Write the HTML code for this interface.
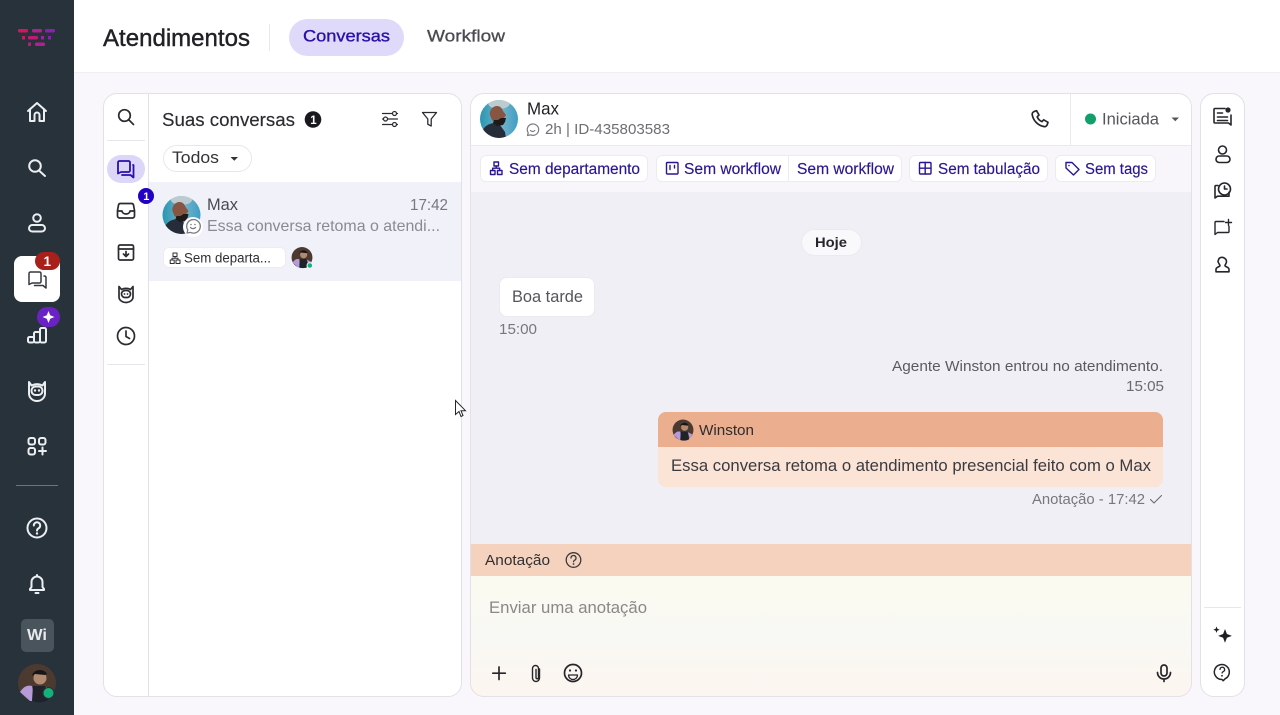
<!DOCTYPE html>
<html lang="pt-BR"><head><meta charset="utf-8"><title>Atendimentos</title>
<style>
html,body{margin:0;padding:0;width:1280px;height:715px;overflow:hidden;background:#f9f7fc;font-family:"Liberation Sans",sans-serif}
svg{position:absolute;left:0;top:0}
text{font-family:"Liberation Sans",sans-serif}
.b{position:absolute;box-sizing:border-box}
.i{fill:none;stroke-linecap:round;stroke-linejoin:round}
</style></head><body>
<div class="b" style="left:74px;top:0;width:1206px;height:73px;background:#fff;border-bottom:1px solid #f0eff3"></div>
<div class="b" style="left:0;top:0;width:74px;height:715px;background:#27323a"></div>
<div class="b" style="left:14px;top:256px;width:46px;height:46px;background:#fff;border-radius:8px"></div>
<div class="b" style="left:289px;top:19px;width:115px;height:37px;background:#dfdaf9;border-radius:19px"></div>
<div class="b" style="left:269px;top:24px;width:1px;height:27px;background:#e9e9eb"></div>

<div class="b" style="left:103px;top:93px;width:359px;height:604px;background:#fff;border:1px solid #e2e1e6;border-radius:14px;overflow:hidden">
 <div class="b" style="left:44px;top:0;width:1px;height:604px;background:#e2e1e6"></div>
 <div class="b" style="left:45px;top:88px;width:314px;height:99px;background:#f1f1fa"></div>
</div>
<div class="b" style="left:107px;top:140px;width:38px;height:1px;background:#e8e8ec"></div>
<div class="b" style="left:107px;top:364px;width:38px;height:1px;background:#e8e8ec"></div>
<div class="b" style="left:107px;top:155px;width:38px;height:28px;background:#dcd6f8;border-radius:14px"></div>
<div class="b" style="left:163px;top:145px;width:89px;height:27px;background:#fff;border:1px solid #e8e7ec;border-radius:14px"></div>
<div class="b" style="left:163px;top:247px;width:123px;height:21px;background:#fff;border:1px solid #ececf1;border-radius:6px"></div>

<div class="b" style="left:470px;top:93px;width:722px;height:604px;background:#f0eff5;border:1px solid #e2e1e6;border-radius:14px;overflow:hidden">
 <div class="b" style="left:0;top:0;width:720px;height:52px;background:#fff;border-bottom:1px solid #eaeaee"></div>
 <div class="b" style="left:0;top:52px;width:720px;height:46px;background:#f8f6fb"></div>
 <div class="b" style="left:599px;top:0;width:1px;height:52px;background:#eaeaee"></div>
 <div class="b" style="left:0;top:450px;width:720px;height:32px;background:#f5d2bd"></div>
 <div class="b" style="left:0;top:482px;width:720px;height:121px;background:linear-gradient(#fbfaf0,#f8f9f4 50%,#fdf5ef)"></div>
</div>
<div class="b" style="left:480px;top:155px;width:168px;height:27px;background:#fff;border:1px solid #ecebf0;border-radius:6px"></div>
<div class="b" style="left:656px;top:155px;width:246px;height:27px;background:#fff;border:1px solid #ecebf0;border-radius:6px"></div>
<div class="b" style="left:788px;top:155px;width:1px;height:27px;background:#ecebf0"></div>
<div class="b" style="left:909px;top:155px;width:139px;height:27px;background:#fff;border:1px solid #ecebf0;border-radius:6px"></div>
<div class="b" style="left:1055px;top:155px;width:101px;height:27px;background:#fff;border:1px solid #ecebf0;border-radius:6px"></div>
<div class="b" style="left:801px;top:229px;width:61px;height:27px;background:#f9f8fb;border:1px solid #ebeaee;border-radius:14px"></div>
<div class="b" style="left:499px;top:277px;width:96px;height:40px;background:#fff;border:1px solid #ebeaee;border-radius:8px"></div>
<div class="b" style="left:658px;top:412px;width:505px;height:75px;background:#fbe4d6;border-radius:8px;overflow:hidden"><div style="height:35px;background:#ebae8e"></div></div>
<div class="b" style="left:1200px;top:93px;width:45px;height:604px;background:#fff;border:1px solid #e2e1e6;border-radius:14px"></div>
<div class="b" style="left:1204px;top:607px;width:37px;height:1px;background:#e8e8ec"></div>
<div class="b" style="left:16px;top:485px;width:42px;height:1px;background:#6d757b"></div>
<div class="b" style="left:21px;top:619px;width:33px;height:33px;background:#4a545c;border-radius:5px"></div>

<svg width="1280" height="715" viewBox="0 0 1280 715" xmlns="http://www.w3.org/2000/svg">
<defs>
<linearGradient id="av" x1="0" y1="0" x2="1" y2="0"><stop offset="0" stop-color="#2a96b2"/><stop offset=".55" stop-color="#74b4c8"/><stop offset="1" stop-color="#3f9ec4"/></linearGradient>
<clipPath id="cc"><circle r="19"/></clipPath>
<g id="max"><g clip-path="url(#cc)"><rect x="-19" y="-19" width="38" height="38" fill="url(#av)"/><ellipse cx="0" cy="-16" rx="11" ry="6" fill="#bccbd0"/><path d="M-18 19c0-9 5-14 13-15l6 2 5 7 1 6z" fill="#262c38"/><path d="M-9-4c-1-5 3-9 7-9 3 0 5 2 6 5l3 4-2 3-1 4-7 1-4-3z" fill="#875541"/><path d="M-5 1l4 0 3-2 5 0-1 4-2 3-6 1-4-3z" fill="#1e1a1a"/></g></g>
<g id="win"><circle r="19" fill="#4c3a30"/><path d="M-17 9c4-6 8-7 12-6l3 15h-5z" fill="#b79ad8"/><path d="M-4 3h12l3 14a19 19 0 0 1-16 1z" fill="#20222a"/><circle cx="3" cy="-5" r="6.5" fill="#b28a70"/><path d="M-5-7c1-7 12-8 15-2l-2 1-10-1z" fill="#16161a"/><path d="M9 4l8 4-5 8z" fill="#b79ad8"/></g>
</defs>

<!-- logo -->
<g fill="#c01a78">
<rect x="18" y="29" width="10" height="3.5" rx="1.5" fill="#d4145f"/><rect x="32" y="29" width="10" height="3.5" rx="1.5" fill="#b2208f"/><rect x="45" y="29" width="10" height="3.5" rx="1.5" fill="#8a1fb0"/>
<rect x="22" y="36" width="3" height="3.5" fill="#d4145f"/><rect x="28" y="36" width="10" height="3.5" rx="1.5"/><rect x="41" y="36" width="3" height="3.5" fill="#a0209f"/><rect x="48" y="36" width="3" height="3.5" fill="#8a1fb0"/>
<rect x="28" y="42.500" width="3" height="3.500"/><rect x="35" y="42.500" width="10" height="3.500" rx="1.500" fill="#b2208f"/>
</g>

<!-- nav icons -->
<g class="i" stroke="#eceff1" stroke-width="2">
<path d="M28 111l9-8 9 8M30 109v12h4.500v-6a2.500 2.500 0 0 1 5 0v6H44v-12"/>
<circle cx="35" cy="166" r="5.800"/><path d="M39.500 171l5.500 5"/>
<circle cx="37" cy="218" r="3.800"/><rect x="29" y="225" width="16" height="6.500" rx="3.250"/>
<rect x="28" y="337" width="6" height="5.500" rx="1.500"/><rect x="34" y="332" width="6" height="10.500" rx="1.500"/><rect x="40" y="328" width="6" height="14.500" rx="1.500"/>
<path d="M29 382v11.500a8 7.500 0 0 0 16 0V382l-2.500 3.500a12 12 0 0 0-11 0z"/><rect x="31.500" y="386.500" width="11" height="8.500" rx="4"/>
<rect x="28.500" y="438" width="6.500" height="6.500" rx="2"/><rect x="39" y="438" width="6.500" height="6.500" rx="2"/><rect x="28.500" y="448" width="6.500" height="6.500" rx="2"/><path d="M42.500 447.500v7M39 451h7"/>
<circle cx="37" cy="528" r="9.500"/><path d="M33.800 525.500a3.200 3.200 0 1 1 4.800 2.800c-1 .6-1.600 1.200-1.600 2.300"/>
<path d="M30 590v-1l1.500-2v-5a5.500 5.500 0 0 1 11 0v5l1.500 2v1zM37 576v-1M35.500 593h3"/>
</g>
<circle cx="37" cy="533.500" r="1.200" fill="#eceff1"/>
<circle cx="35" cy="390.500" r="1.200" fill="#eceff1"/><circle cx="39" cy="390.500" r="1.200" fill="#eceff1"/>
<g class="i" stroke="#33393e" stroke-width="1.500"><path d="M29 273.500a1.500 1.500 0 0 1 1.500-1.500h9a1.500 1.500 0 0 1 1.500 1.500v8a1.500 1.500 0 0 1-1.500 1.500H32l-3 1.500z"/><path d="M44 276h.5a1.500 1.500 0 0 1 1.500 1.500v10.500l-3-2.500h-8.500"/></g>
<rect x="35" y="252" width="25" height="18" rx="9" fill="#a8201a"/>
<text x="43.500" y="266" font-size="13.500" font-weight="700" fill="#fff">1</text>
<rect x="37" y="307" width="23" height="20" rx="10" fill="#6a22c4"/>
<path d="M48.500 311l1.700 4.300 4.300 1.700-4.300 1.700-1.700 4.300-1.700-4.300-4.300-1.700 4.300-1.700z" fill="#fff"/>
<text x="27" y="640" font-size="16" font-weight="700" fill="#e8eaec" textLength="20" lengthAdjust="spacingAndGlyphs">Wi</text>
<use href="#win" transform="translate(37 683)"/>
<circle cx="48.500" cy="693" r="5.500" fill="#14b27a" stroke="#27323a" stroke-width="1"/>

<!-- header text -->
<text x="103" y="46" font-size="24" fill="#212125" stroke="#212125" stroke-width=".4" textLength="147" lengthAdjust="spacingAndGlyphs">Atendimentos</text>
<text x="303" y="41.500" font-size="17" fill="#2a10a8" stroke="#2a10a8" stroke-width=".35" textLength="87" lengthAdjust="spacingAndGlyphs">Conversas</text>
<text x="427" y="41.500" font-size="17" fill="#4a4a50" stroke="#4a4a50" stroke-width=".3" textLength="78" lengthAdjust="spacingAndGlyphs">Workflow</text>

<!-- left rail -->
<g class="i" stroke="#2b2b30" stroke-width="1.700">
<circle cx="124.500" cy="115.500" r="5.800"/><path d="M129 120l4.500 4.500"/>
<path d="M120.500 203.500h11a2 2 0 0 1 2 1.500l1 5.500v5.500a2 2 0 0 1-2 2h-13a2 2 0 0 1-2-2v-5.500l1-5.500a2 2 0 0 1 2-1.500z"/><path d="M118 211h4a4 3 0 0 0 8 0h4"/>
<rect x="118.500" y="245" width="15" height="15" rx="1.500"/><path d="M118.500 249h15M126 251.500v5M123.500 254l2.500 2.500 2.500-2.500"/>
<path d="M119 286.500v10.500a7 5.500 0 0 0 14 0v-10.500l-2.500 3a10 10 0 0 0-9 0z"/><rect x="121.500" y="290.500" width="9" height="7" rx="3.500"/>
<circle cx="126" cy="336" r="8.500"/><path d="M126 331v5.500l3.500 2"/>
</g>
<circle cx="124.500" cy="294" r=".9" fill="#2b2b30"/><circle cx="127.500" cy="294" r=".9" fill="#2b2b30"/>
<g class="i" stroke="#2a10a8" stroke-width="1.800"><path d="M118 162.500a1.500 1.500 0 0 1 1.500-1.500h9a1.500 1.500 0 0 1 1.500 1.500v8a1.500 1.500 0 0 1-1.500 1.500H121l-3 1.500z"/><path d="M133 165h.5v12.500l-3-2.500h-8.500"/></g>
<circle cx="146" cy="196" r="8" fill="#2200c4"/>
<text x="143.200" y="200" font-size="11" font-weight="700" fill="#fff">1</text>

<!-- list -->
<text x="162" y="126" font-size="18.500" fill="#2b2b30" stroke="#2b2b30" stroke-width=".15" textLength="133" lengthAdjust="spacingAndGlyphs">Suas conversas</text>
<circle cx="313" cy="119.500" r="8.300" fill="#1a1a1e"/><text x="310.300" y="124" font-size="11.500" font-weight="700" fill="#fff">1</text>
<g class="i" stroke="#2b2b30" stroke-width="1.200">
<path d="M382.500 113.500h10M396.500 113.500h1M382.500 119h1M387.500 119h10M382.500 124.500h10M396.500 124.500h1"/><circle cx="394.500" cy="113.500" r="2"/><circle cx="385.500" cy="119" r="2"/><circle cx="394.500" cy="124.500" r="2"/>
<path d="M422.500 112.500h14l-5.300 6.500v7l-3.400-1.700v-5.300z" stroke-width="1.300"/>
</g>
<text x="172" y="163" font-size="17" fill="#333338" textLength="47" lengthAdjust="spacingAndGlyphs">Todos</text>
<path d="M230.500 157h7.500l-3.700 3.800z" fill="#333338"/>
<use href="#max" transform="translate(181.500 215)"/>
<circle cx="193" cy="227" r="10" fill="#fff"/>
<g class="i" stroke="#7a7a80" stroke-width="1.300"><path d="M187 233l.8-3a6.800 6.800 0 1 1 2.700 2.400z"/><path d="M190.500 227.500c1.300 1.500 3.500 1.500 5 0"/></g>
<circle cx="191" cy="224.500" r=".8" fill="#7a7a80"/><circle cx="195" cy="224.500" r=".8" fill="#7a7a80"/>
<text x="207" y="210" font-size="16.500" fill="#4a4a54" textLength="31" lengthAdjust="spacingAndGlyphs">Max</text>
<text x="410" y="210" font-size="15.500" fill="#78787e" textLength="38" lengthAdjust="spacingAndGlyphs">17:42</text>
<text x="207" y="231" font-size="16" fill="#8a8a92" textLength="233" lengthAdjust="spacingAndGlyphs">Essa conversa retoma o atendi...</text>
<g class="i" stroke="#2f2f34" stroke-width="1"><rect x="173" y="253" width="4" height="3.500"/><rect x="170.200" y="260" width="4" height="3.500"/><rect x="176" y="260" width="4" height="3.500"/><path d="M175 256.500v1.700h-3v1.800M175 258.200h3v1.800"/></g>
<text x="184" y="262.500" font-size="13.500" fill="#2f2f34" textLength="87" lengthAdjust="spacingAndGlyphs">Sem departa...</text>
<use href="#win" transform="translate(302 257.500) scale(.55)"/>
<circle cx="309.800" cy="265.500" r="2.800" fill="#14b27a" stroke="#f1f1fa"/>

<!-- chat header -->
<use href="#max" transform="translate(499 119)"/>
<text x="527" y="114.500" font-size="17.500" fill="#222226" textLength="32" lengthAdjust="spacingAndGlyphs">Max</text>
<g class="i" stroke="#7a7a80" stroke-width="1.200"><path d="M527.500 135.500l.7-2.700a5.700 5.700 0 1 1 2.300 2z"/><path d="M530.500 130.500c1.200 1.300 3 1.300 4.300 0"/></g>
<text x="545" y="134" font-size="15" fill="#6e6e74" textLength="125" lengthAdjust="spacingAndGlyphs">2h | ID-435803583</text>
<path class="i" stroke="#26262a" stroke-width="1.700" d="M1034 111.500l2.500-.8 2.500 4.300-1.800 1.800c.8 2 2.700 4 4.700 4.800l1.800-1.800 4.300 2.500-.8 2.500c-.4 1.200-1.800 2-3 1.800-6.200-1-11-6-12-12-.2-1.200.6-2.500 1.800-2.900z"/>
<circle cx="1090.500" cy="119" r="5.500" fill="#12a06a"/>
<text x="1102" y="124.500" font-size="16.500" fill="#55555c" textLength="57" lengthAdjust="spacingAndGlyphs">Iniciada</text>
<path d="M1171.500 117.500h7.500l-3.700 3.800z" fill="#55555c"/>

<!-- chips -->
<g fill="#2a1690" font-size="15.500" stroke="#2a1690" stroke-width=".15">
<text x="509" y="174" textLength="131" lengthAdjust="spacingAndGlyphs">Sem departamento</text>
<text x="684" y="174" textLength="97" lengthAdjust="spacingAndGlyphs">Sem workflow</text>
<text x="797" y="174" textLength="97" lengthAdjust="spacingAndGlyphs">Sem workflow</text>
<text x="938" y="174" textLength="102" lengthAdjust="spacingAndGlyphs">Sem tabulação</text>
<text x="1085" y="174" textLength="63" lengthAdjust="spacingAndGlyphs">Sem tags</text>
</g>
<g class="i" stroke="#2a1690" stroke-width="1.400">
<rect x="494" y="162" width="4.500" height="4"/><rect x="490.500" y="170.500" width="4.500" height="4"/><rect x="497.500" y="170.500" width="4.500" height="4"/><path d="M496.200 166v2.200h-3.500v2.300M496.200 168.200h3.500v2.300"/>
<rect x="666.500" y="162.500" width="11.500" height="11.500" rx="1"/><path d="M670 165.500v4M674.500 165.500v2.500"/>
<rect x="919.500" y="162.500" width="11.500" height="11.500" rx="1"/><path d="M925.200 162.500v11.500M919.500 168.200h11.500"/>
<path d="M1066 162.500h6l7 7-5.500 5.500-7.500-7z"/>
</g>
<circle cx="1069" cy="165.500" r=".8" fill="#2a1690"/>

<!-- messages -->
<text x="815" y="247" font-size="14" font-weight="700" fill="#26262a" textLength="32" lengthAdjust="spacingAndGlyphs">Hoje</text>
<text x="512" y="302" font-size="16.500" fill="#55555c" textLength="71" lengthAdjust="spacingAndGlyphs">Boa tarde</text>
<text x="499" y="334" font-size="15" fill="#77777e" textLength="38" lengthAdjust="spacingAndGlyphs">15:00</text>
<text x="892" y="371" font-size="15" fill="#5a5a62" textLength="271" lengthAdjust="spacingAndGlyphs">Agente Winston entrou no atendimento.</text>
<text x="1126" y="391" font-size="15" fill="#6a6a72" textLength="38" lengthAdjust="spacingAndGlyphs">15:05</text>
<use href="#win" transform="translate(683 430) scale(.55)"/>
<text x="699" y="435" font-size="15" fill="#2d2d30" textLength="55" lengthAdjust="spacingAndGlyphs">Winston</text>
<text x="671" y="471" font-size="17" fill="#3a3a40" textLength="480" lengthAdjust="spacingAndGlyphs">Essa conversa retoma o atendimento presencial feito com o Max</text>
<text x="1032" y="504" font-size="15" fill="#77777e" textLength="113" lengthAdjust="spacingAndGlyphs">Anotação - 17:42</text>
<path class="i" stroke="#6a6a72" stroke-width="1.100" d="M1150.500 499.500l3.500 3.500 7.500-7.500"/>

<!-- composer -->
<text x="485" y="565" font-size="15" fill="#2f2f33" textLength="65" lengthAdjust="spacingAndGlyphs">Anotação</text>
<circle class="i" stroke="#3a3a40" stroke-width="1.300" cx="573.500" cy="560" r="7.300"/>
<path class="i" stroke="#3a3a40" stroke-width="1.300" d="M571 558a2.500 2.500 0 1 1 3.700 2.200c-.8.500-1.200.9-1.200 1.600"/><circle cx="573.500" cy="564" r=".9" fill="#3a3a40"/>
<text x="489" y="613" font-size="17" fill="#8a8888" textLength="158" lengthAdjust="spacingAndGlyphs">Enviar uma anotação</text>
<g class="i" stroke="#26262a" stroke-width="1.700">
<path d="M499 667v12.500M492.800 673.200h12.500"/>
<path d="M539.500 669v9a3.500 3.500 0 0 1-7 0v-9.500a3 3 0 0 1 6 0v9a1.200 1.200 0 0 1-2.500 0v-8" stroke-width="1.400"/>
<circle cx="573" cy="673" r="8.500"/><path d="M568.500 675h9a4.500 4.500 0 0 1-9 0z" stroke-width="1.300"/>
<rect x="1161" y="665" width="6" height="11" rx="3"/><path d="M1157.500 672.500a6.500 6.500 0 0 0 13 0M1164 679v2.500"/>
</g>
<circle cx="570" cy="670.500" r="1.100" fill="#26262a"/><circle cx="576" cy="670.500" r="1.100" fill="#26262a"/>

<!-- right rail -->
<g class="i" stroke="#26262a" stroke-width="1.600">
<path d="M1225 108.500h-10a1 1 0 0 0-1 1v12.500a1 1 0 0 0 1 1h13.500l2.500 2v-10"/><path d="M1217.500 113h5M1217.500 117h10M1217.500 120.500h10"/>
<circle cx="1222.500" cy="150" r="4"/><rect x="1216" y="156" width="14" height="6.500" rx="3.200"/>
<path d="M1215 198v-11.500a1 1 0 0 1 1-1h2M1215 198l2.500-1.800h11.500v-4"/><circle cx="1224.500" cy="189" r="6"/><path d="M1224.500 186v3h2.500"/>
<path d="M1224 221.500h-8a1 1 0 0 0-1 1v12l2.500-2h10.500a1 1 0 0 0 1-1v-5" stroke-width="1.400"/><path d="M1228.500 219.500v6M1225.500 222.500h6" stroke-width="1.400"/>
<path d="M1219 258.500a4.500 4.500 0 0 1 7.500 3.300c0 2-1.500 2.500-1.500 4 0 1 4 1.200 4 3.500v2.500h-13v-2.500c0-2.300 4-2.500 4-3.500 0-1.500-2-2.500-2-4.500z"/>
<path d="M1222 679.500a7.500 7.500 0 1 1 3.200-.8l-2 2z" stroke-width="1.500"/>
<path d="M1220 669.500a2.300 2.300 0 1 1 3.300 2.100c-.7.400-1.200.8-1.200 1.400" stroke-width="1.300"/>
</g>
<circle cx="1222" cy="675.800" r=".9" fill="#26262a"/>
<circle cx="1228" cy="110" r="2.600" fill="#26262a"/>
<path d="M1225 629l1.900 5 5 1.900-5 1.900-1.900 5-1.900-5-5-1.900 5-1.900zM1216.500 626.500l.9 2.300 2.300.9-2.300.9-.9 2.300-.9-2.300-2.300-.9 2.300-.9z" fill="#1e1e24"/>

<!-- cursor -->
<path d="M455.500 400.500v14l3.500-3 2 5 2-1-2-4.800h4.500z" fill="#fff" stroke="#26262a" stroke-width="1"/>
</svg>
</body></html>
